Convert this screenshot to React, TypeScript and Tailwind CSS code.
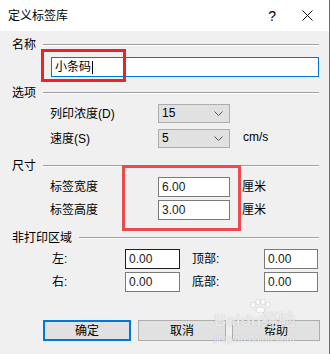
import React from "react";

const font = { fontFamily: '"Liberation Sans", "Noto Sans CJK SC", sans-serif' };

function GroupHeader({ label, mt }: { label: string; mt: string }) {
  return (
    <div className={`flex items-center h-[16px] pl-[12px] pr-[10px] ${mt}`}>
      <span className="text-[12px] leading-[16px] text-black whitespace-nowrap">{label}</span>
      <div className="flex-1 ml-[7px] h-px bg-[#a0a0a0] border-b border-white box-content" />
    </div>
  );
}

function Select({ value }: { value: string }) {
  return (
    <div className="w-[72px] h-[19px] bg-[#e1e1e1] border border-[#adadad] flex items-center justify-between pl-[3px] pr-[6px]">
      <span className="text-[12px] leading-[17px] text-black">{value}</span>
      <svg width="9" height="5" viewBox="0 0 9 5">
        <path d="M0.5 0.5 L4.5 4.5 L8.5 0.5" fill="none" stroke="#555" strokeWidth="1" />
      </svg>
    </div>
  );
}

function Field({ value, w, dark }: { value: string; w: string; dark?: boolean }) {
  return (
    <div
      className={`${w} h-[20px] bg-white border ${dark ? "border-[#1e1e1e]" : "border-[#7a7a7a]"} flex items-center pl-[3px]`}
    >
      <span className="text-[12px] leading-[18px] text-[#1a1a1a]">{value}</span>
    </div>
  );
}

export default function App() {
  return (
    <div className="relative w-[331px] h-[354px] bg-white overflow-hidden" style={font}>
      <div className="w-[330px] h-[354px] border-r border-[#1883d7] flex flex-col">
        {/* Title bar */}
        <div className="h-[31px] bg-white flex items-center pl-[8px] shrink-0">
          <span className="text-[12px] leading-[16px] text-black">定义标签库</span>
          <span className="ml-auto text-[14px] leading-[16px] text-black mr-[26px]">?</span>
          <svg width="11" height="11" viewBox="0 0 11 11" className="mr-[16px]">
            <path d="M0.5 0.5 L10.5 10.5 M10.5 0.5 L0.5 10.5" stroke="#111" strokeWidth="1" />
          </svg>
        </div>

        {/* Body */}
        <div className="flex-1 bg-[#f0f0f0] flex flex-col">
          <GroupHeader label="名称" mt="mt-[6px]" />
          <div className="pl-[51px] pr-[10px] mt-[4px]">
            <div className="h-[20px] bg-white border border-[#0078d7] flex items-center pl-[3px]">
              <span className="text-[12px] leading-[18px] text-black">小条码</span>
              <span className="w-px h-[13px] bg-black ml-px" />
            </div>
          </div>

          <GroupHeader label="选项" mt="mt-[8px]" />
          <div className="flex items-center mt-[3px] h-[19px]">
            <span className="w-[158px] shrink-0 pl-[50px] text-[12px] leading-[16px] whitespace-nowrap">列印浓度(D)</span>
            <Select value="15" />
          </div>
          <div className="flex items-center mt-[6px] h-[19px]">
            <span className="w-[158px] shrink-0 pl-[50px] text-[12px] leading-[16px] whitespace-nowrap">速度(S)</span>
            <Select value="5" />
            <span className="ml-[13px] text-[12px] leading-[16px] -mt-[4px]">cm/s</span>
          </div>

          <GroupHeader label="尺寸" mt="mt-[10px]" />
          <div className="flex items-center mt-[3px]">
            <span className="w-[158px] shrink-0 pl-[50px] text-[12px] leading-[16px] whitespace-nowrap">标签宽度</span>
            <Field value="6.00" w="w-[72px]" />
            <span className="ml-[12px] text-[12px] leading-[16px]">厘米</span>
          </div>
          <div className="flex items-center mt-[3px]">
            <span className="w-[158px] shrink-0 pl-[50px] text-[12px] leading-[16px] whitespace-nowrap">标签高度</span>
            <Field value="3.00" w="w-[72px]" />
            <span className="ml-[12px] text-[12px] leading-[16px]">厘米</span>
          </div>

          <GroupHeader label="非打印区域" mt="mt-[10px]" />
          <div className="flex items-center mt-[3px]">
            <span className="w-[125px] shrink-0 pl-[52px] text-[12px] leading-[16px]">左:</span>
            <Field value="0.00" w="w-[55px]" dark />
            <span className="w-[84px] shrink-0 pl-[12px] text-[12px] leading-[16px]">顶部:</span>
            <Field value="0.00" w="w-[54px]" />
          </div>
          <div className="flex items-center mt-[3px]">
            <span className="w-[125px] shrink-0 pl-[52px] text-[12px] leading-[16px]">右:</span>
            <Field value="0.00" w="w-[55px]" />
            <span className="w-[84px] shrink-0 pl-[12px] text-[12px] leading-[16px]">底部:</span>
            <Field value="0.00" w="w-[54px]" />
          </div>

          <div className="flex items-center mt-[28px] pl-[43px]">
            <button className="w-[88px] h-[21px] bg-[#e1e1e1] border-2 border-[#0078d7] text-[12px] leading-[16px] text-black">
              确定
            </button>
            <button className="ml-[7px] w-[88px] h-[21px] bg-[#e1e1e1] border border-[#adadad] text-[12px] leading-[16px] text-black">
              取消
            </button>
            <button className="ml-[6px] w-[88px] h-[21px] bg-[#e1e1e1] border border-[#adadad] text-[12px] leading-[16px] text-black">
              帮助
            </button>
          </div>
        </div>
      </div>

      {/* Red highlight boxes */}
      <div className="absolute left-[41px] top-[49px] w-[85px] h-[33px] border-[3px] border-[#e8232b]" />
      <div className="absolute left-[122px] top-[165px] w-[119px] h-[66px] border-[3px] border-[#ec4a4c]" />

      {/* Watermark */}
      <div className="absolute left-[214px] top-[299px] w-[92px] pointer-events-none select-none flex flex-col items-start">
        <svg width="24" height="14" viewBox="0 0 24 14" className="ml-[34px]">
          <g fill="rgba(255,255,255,0.7)" stroke="rgba(160,160,160,0.5)" strokeWidth="0.6">
            <ellipse cx="5" cy="6" rx="2.2" ry="3" />
            <ellipse cx="10" cy="3" rx="2.2" ry="3" />
            <ellipse cx="15" cy="3" rx="2.2" ry="3" />
            <ellipse cx="20" cy="6" rx="2.2" ry="3" />
            <ellipse cx="12.5" cy="11" rx="4.5" ry="3" />
          </g>
        </svg>
        <div
          className="text-[17px] leading-[16px] font-bold text-[rgba(255,255,255,0.7)]"
          style={{ textShadow: "0 0 1px rgba(140,140,140,0.55)" }}
        >
          Baidu经验
        </div>
        <div
          className="text-[10px] leading-[11px] text-[rgba(255,255,255,0.75)] mt-[4px]"
          style={{ textShadow: "0 0 1px rgba(140,140,140,0.55)" }}
        >
          jingyan.baidu.com
        </div>
      </div>
    </div>
  );
}
